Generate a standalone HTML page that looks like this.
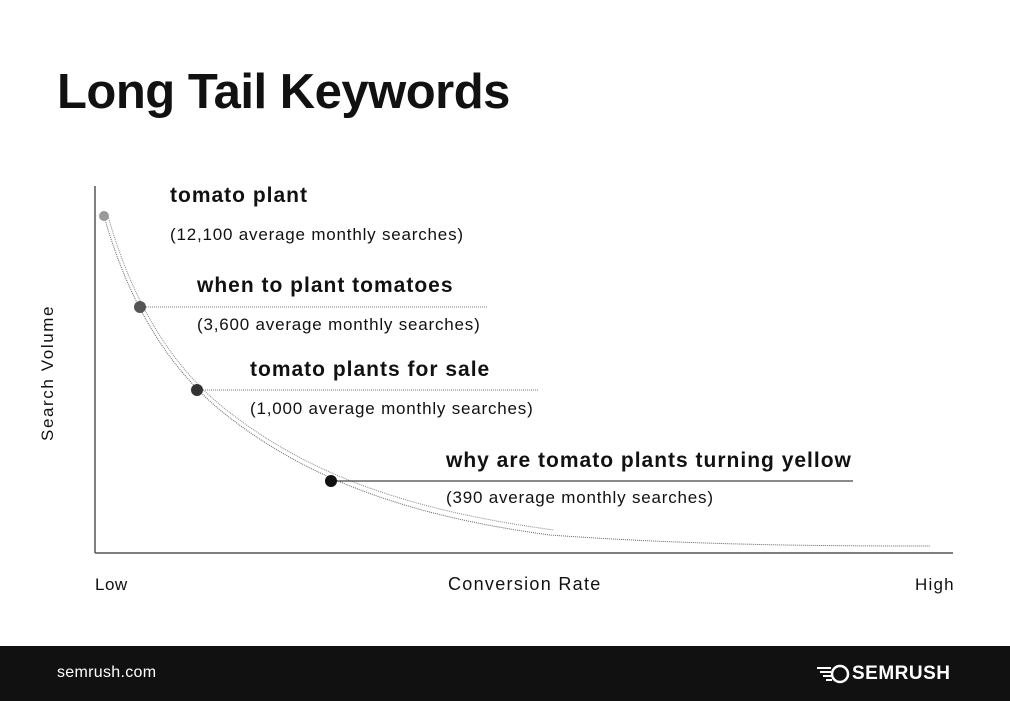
<!DOCTYPE html>
<html><head><meta charset="utf-8"><style>
body{margin:0;width:1010px;height:701px;background:#fff;position:relative;overflow:hidden;font-family:"Liberation Sans",sans-serif;color:#111}
.t{position:absolute;white-space:nowrap}
h1{position:absolute;left:57px;top:64px;margin:0;font-size:49px;font-weight:bold;letter-spacing:-0.5px}
.k{font-size:21px;font-weight:bold;letter-spacing:1px}
.s{font-size:17px;letter-spacing:0.8px}
.foot{position:absolute;left:0;top:646px;width:1010px;height:55px;background:#111;color:#fff}
</style></head><body>
<h1>Long Tail Keywords</h1>
<svg width="1010" height="701" style="position:absolute;left:0;top:0">
<line x1="95" y1="186" x2="95" y2="553" stroke="#555" stroke-width="1.5"/>
<line x1="95" y1="553" x2="953" y2="553" stroke="#555" stroke-width="1.5"/>
<path d="M104 216 C125 290 160 360 220 410 C300 475 400 515 550 535 C700 546 850 546 930 546" fill="none" stroke="#666" stroke-width="1" stroke-dasharray="1 1"/>
<path d="M108 216 C129 290 164 360 224 408 C304 472 404 510 554 530" fill="none" stroke="#888" stroke-width="1" stroke-dasharray="1 1"/>
<line x1="140" y1="307" x2="488" y2="307" stroke="#777" stroke-dasharray="1 1"/>
<line x1="197" y1="390" x2="538" y2="390" stroke="#777" stroke-dasharray="1 1"/>
<line x1="331" y1="481" x2="853" y2="481" stroke="#444" stroke-width="1.2"/>
<circle cx="104" cy="216" r="5" fill="#999"/>
<circle cx="140" cy="307" r="6" fill="#555"/>
<circle cx="197" cy="390" r="6" fill="#333"/>
<circle cx="331" cy="481" r="6" fill="#111"/>
</svg>
<div class="t k" style="left:170px;top:184px">tomato plant</div>
<div class="t s" style="left:170px;top:225px">(12,100 average monthly searches)</div>
<div class="t k" style="left:197px;top:274px">when to plant tomatoes</div>
<div class="t s" style="left:197px;top:315px">(3,600 average monthly searches)</div>
<div class="t k" style="left:250px;top:358px">tomato plants for sale</div>
<div class="t s" style="left:250px;top:399px">(1,000 average monthly searches)</div>
<div class="t k" style="left:446px;top:449px">why are tomato plants turning yellow</div>
<div class="t s" style="left:446px;top:488px">(390 average monthly searches)</div>
<div class="t" style="left:38px;top:441px;font-size:17px;letter-spacing:1.6px;transform:rotate(-90deg);transform-origin:0 0">Search Volume</div>
<div class="t" style="left:95px;top:575px;font-size:17px;letter-spacing:0.5px">Low</div>
<div class="t" style="left:448px;top:574px;font-size:18px;letter-spacing:1.3px">Conversion Rate</div>
<div class="t" style="left:915px;top:575px;font-size:17px;letter-spacing:1.2px">High</div>
<div class="foot">
<div class="t" style="left:57px;top:18px;font-size:16px;letter-spacing:0.3px">semrush.com</div>
<svg style="position:absolute;left:815px;top:18px" width="36" height="20" viewBox="0 0 36 20"><circle cx="25" cy="10" r="8" fill="none" stroke="#fff" stroke-width="2.5"/><path d="M2 4h14M5 8h11M8 12h8M11 16h6" stroke="#fff" stroke-width="2"/></svg>
<div class="t" style="left:852px;top:17px;font-size:19px;font-weight:bold;letter-spacing:0.5px">SEMRUSH</div>
</div>
</body></html>
